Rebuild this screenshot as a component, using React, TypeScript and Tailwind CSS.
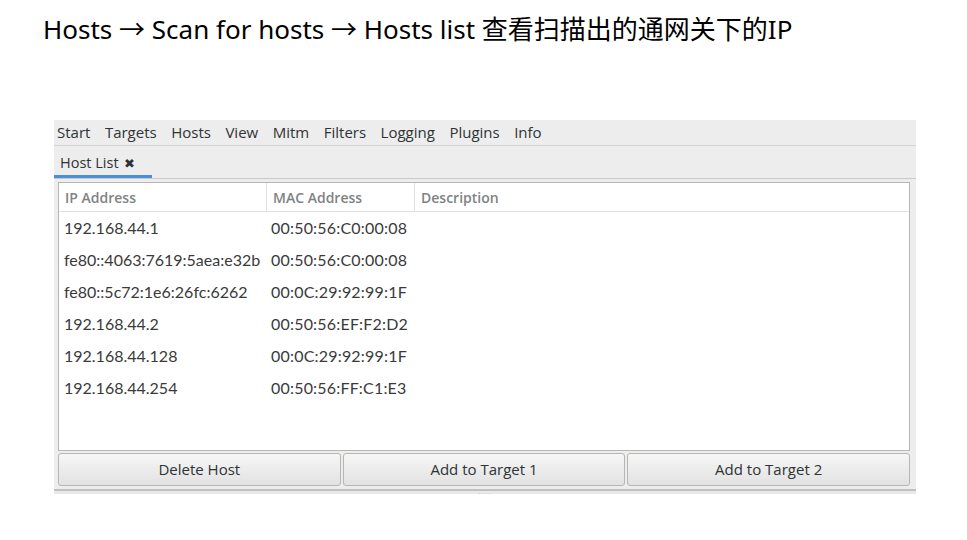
const MENU = ['Start', 'Targets', 'Hosts', 'View', 'Mitm', 'Filters', 'Logging', 'Plugins', 'Info']

const HOSTS = [
  { ip: '192.168.44.1', mac: '00:50:56:C0:00:08' },
  { ip: 'fe80::4063:7619:5aea:e32b', mac: '00:50:56:C0:00:08' },
  { ip: 'fe80::5c72:1e6:26fc:6262', mac: '00:0C:29:92:99:1F' },
  { ip: '192.168.44.2', mac: '00:50:56:EF:F2:D2' },
  { ip: '192.168.44.128', mac: '00:0C:29:92:99:1F' },
  { ip: '192.168.44.254', mac: '00:50:56:FF:C1:E3' },
]

export default function App() {
  return (
    <div
      className="w-[967px] h-[540px] bg-white overflow-hidden"
      style={{ fontFamily: '"Open Sans", "Noto Sans CJK SC", sans-serif' }}
    >
      {/* Slide title */}
      <h1
        className="pl-[43px] pt-[11px] text-[26px] leading-[36px] text-black"
        style={{ fontFamily: '"Noto Sans", "Noto Sans CJK SC", sans-serif' }}
      >
        Hosts → Scan for hosts → Hosts list 查看扫描出的通网关下的IP
      </h1>

      {/* Window */}
      <div className="ml-[54px] mt-[73px] w-[862px] bg-[#ededed] text-[#2e3436]">
        {/* Menu bar */}
        <div className="flex h-[26px] items-center gap-[14.5px] pl-[3px] pb-[1px] text-[15px] border-b border-[#d4d4d4]">
          {MENU.map((m) => (
            <span key={m}>{m}</span>
          ))}
        </div>

        {/* Tab strip */}
        <div className="flex h-[33px] border-b border-[#c9c9c9]">
          <div className="flex w-[98px] items-center gap-[5px] border-b-[3px] border-[#4a90d9] pl-[6px] pt-[5px] text-[14.5px]">
            Host List
            <span className="text-[13px] leading-none">✖</span>
          </div>
        </div>

        {/* Table + buttons */}
        <div className="pl-[4px] pr-[6px] pt-[3px] pb-[3px]">
          <div className="h-[269px] border border-[#b6b6b3] bg-white">
            <div className="flex h-[29px] items-center border-b border-[#e0e0e0] text-[14px] font-semibold text-[#7f8384]">
              <div className="w-[207px] pl-[6px]">IP Address</div>
              <div className="h-full w-[148px] flex items-center border-l border-[#e0e0e0] pl-[6px]">MAC Address</div>
              <div className="h-full flex-1 flex items-center border-l border-[#e0e0e0] pl-[6px]">Description</div>
            </div>
            <div>
              {HOSTS.map((h) => (
                <div key={h.ip} className="flex h-[32px] items-center text-[16px] text-[#3a3a3a]" style={{ fontFamily: 'Lato, sans-serif' }}>
                  <div className="w-[207px] pl-[5px] whitespace-nowrap">{h.ip}</div>
                  <div className="w-[148px] pl-[5px] whitespace-nowrap tracking-[0.2px]">{h.mac}</div>
                </div>
              ))}
            </div>
          </div>

          <div className="mt-[2px] grid grid-cols-3 gap-[2px]">
            {['Delete Host', 'Add to Target 1', 'Add to Target 2'].map((b) => (
              <button
                key={b}
                type="button"
                className="h-[33px] rounded-[3px] border border-[#b6b6b3] bg-gradient-to-b from-[#f6f6f6] to-[#e2e2e2] text-[15px] text-[#2e3436]"
              >
                {b}
              </button>
            ))}
          </div>
        </div>

        {/* Pane grip */}
        <div className="flex h-[5px] justify-center border-t-[2px] border-[#c0c0c0] bg-[#e8e8e8]">
          <span className="text-[6px] leading-[3px] tracking-[1px] text-[#b0b0b0]">.....</span>
        </div>
      </div>
    </div>
  )
}
